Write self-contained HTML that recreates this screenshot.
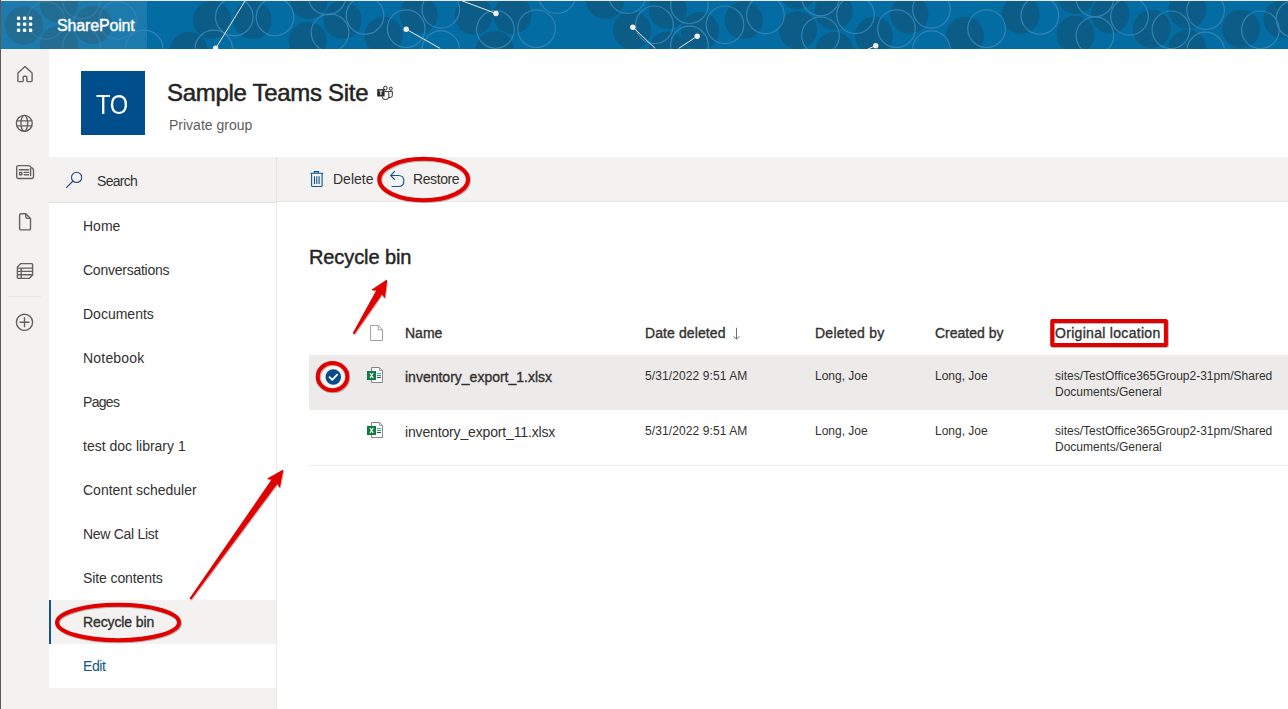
<!DOCTYPE html>
<html><head><meta charset="utf-8">
<style>
*{box-sizing:border-box;margin:0;padding:0}
html,body{width:1288px;height:709px;overflow:hidden;background:#fff;font-family:"Liberation Sans",sans-serif;color:#323130}
.a{position:absolute;white-space:nowrap}
#topline{position:absolute;left:0;top:0;width:1288px;height:1px;background:#ebe7e4}
#leftline{position:absolute;left:0;top:0;width:1px;height:709px;background:#5f5955}
#hdr{position:absolute;left:1px;top:1px;width:1287px;height:48px;overflow:hidden}
#hdrtxt{position:absolute;left:56px;top:16px;font-size:16px;color:#fff;-webkit-text-stroke:0.4px #fff;letter-spacing:-0.15px}
#rail{position:absolute;left:1px;top:49px;width:48px;height:660px;background:#f3f2f1}
#nav{position:absolute;left:49px;top:203px;width:228px;height:506px;background:#fff;border-right:1px solid #edebe9}
#navbottom{position:absolute;left:49px;top:688px;width:227px;height:21px;background:#f3f2f1}
#cmd{position:absolute;left:49px;top:157px;width:1239px;height:45px;background:#f3f2f1;border-bottom:1px solid #e9e7e5}
#searchbox{position:absolute;left:49px;top:157px;width:228px;height:46px;background:#f3f2f1;border-right:1px solid #e6e4e2;border-bottom:1px solid #e1dfdd}
.nv{position:absolute;left:83px;font-size:14px;color:#323130}
.hd{position:absolute;font-size:14px;color:#323130;-webkit-text-stroke:0.35px #323130}
.cell{position:absolute;font-size:12px;color:#323130}
svg{overflow:visible}
</style></head><body>
<div id="topline"></div>
<div id="hdr">
<svg width="1287" height="48" style="position:absolute;left:0;top:0">
<rect width="1287" height="48" fill="#036ca3"/>
<g fill="#0b5c86"><circle cx="22.9" cy="24.6" r="19"/><circle cx="58.0" cy="3.0" r="19"/><circle cx="58.0" cy="44.0" r="19"/><circle cx="92.2" cy="24.0" r="19"/><circle cx="211.0" cy="19.0" r="19"/><circle cx="251.6" cy="19.0" r="19"/><circle cx="188.0" cy="50.0" r="19"/><circle cx="306.7" cy="40.0" r="19"/><circle cx="307.5" cy="-1.0" r="19"/><circle cx="341.5" cy="19.0" r="19"/><circle cx="382.7" cy="34.7" r="19"/><circle cx="417.6" cy="13.8" r="19"/><circle cx="472.7" cy="14.5" r="19"/><circle cx="493.7" cy="48.7" r="19"/><circle cx="511.5" cy="14.0" r="19"/><circle cx="604.3" cy="-1.0" r="19"/><circle cx="631.0" cy="29.3" r="19"/><circle cx="666.7" cy="9.0" r="19"/><circle cx="666.7" cy="49.5" r="19"/><circle cx="699.0" cy="30.0" r="19"/><circle cx="742.7" cy="19.2" r="19"/><circle cx="797.0" cy="29.3" r="19"/><circle cx="797.0" cy="-11.0" r="19"/><circle cx="832.7" cy="9.9" r="19"/><circle cx="833.5" cy="50.0" r="19"/><circle cx="873.0" cy="34.7" r="19"/><circle cx="908.4" cy="13.8" r="19"/><circle cx="963.8" cy="34.7" r="19"/><circle cx="1019.7" cy="13.8" r="19"/><circle cx="1074.6" cy="33.7" r="19"/><circle cx="1074.6" cy="-6.0" r="19"/><circle cx="1109.3" cy="13.4" r="19"/><circle cx="1150.7" cy="27.9" r="19"/><circle cx="1186.3" cy="8.6" r="19"/><circle cx="1186.3" cy="48.0" r="19"/><circle cx="1240.2" cy="27.9" r="19"/><circle cx="1281.6" cy="18.3" r="19"/></g>
<defs><clipPath id="cm"><rect x="146" y="0" width="1200" height="48"/></clipPath><clipPath id="co"><rect x="0" y="0" width="146" height="48"/></clipPath></defs>
<g fill="none" stroke="#3383b5" stroke-width="1.2" clip-path="url(#cm)"><circle cx="45.0" cy="19.4" r="18.8"/><circle cx="80.5" cy="-1.0" r="18.8"/><circle cx="80.5" cy="45.0" r="18.8"/><circle cx="116.6" cy="19.4" r="18.8"/><circle cx="233.3" cy="16.0" r="18.8"/><circle cx="274.0" cy="16.0" r="18.8"/><circle cx="212.8" cy="48.0" r="18.8"/><circle cx="143.2" cy="48.0" r="18.8"/><circle cx="329.0" cy="31.6" r="18.8"/><circle cx="326.0" cy="-5.0" r="18.8"/><circle cx="364.0" cy="14.5" r="18.8"/><circle cx="405.2" cy="27.7" r="18.8"/><circle cx="439.8" cy="8.3" r="18.8"/><circle cx="439.8" cy="48.7" r="18.8"/><circle cx="494.5" cy="28.5" r="18.8"/><circle cx="535.5" cy="27.7" r="18.8"/><circle cx="556.1" cy="-6.4" r="18.8"/><circle cx="626.3" cy="-6.4" r="18.8"/><circle cx="653.5" cy="23.8" r="18.8"/><circle cx="688.4" cy="3.7" r="18.8"/><circle cx="688.4" cy="44.0" r="18.8"/><circle cx="724.0" cy="23.8" r="18.8"/><circle cx="764.4" cy="13.8" r="18.8"/><circle cx="819.5" cy="-4.0" r="18.8"/><circle cx="819.5" cy="34.7" r="18.8"/><circle cx="854.5" cy="13.8" r="18.8"/><circle cx="895.5" cy="27.7" r="18.8"/><circle cx="930.4" cy="8.3" r="18.8"/><circle cx="930.4" cy="48.7" r="18.8"/><circle cx="985.6" cy="27.7" r="18.8"/><circle cx="1038.8" cy="14.5" r="18.8"/><circle cx="1093.9" cy="-3.0" r="18.8"/><circle cx="1093.9" cy="34.6" r="18.8"/><circle cx="1128.5" cy="15.4" r="18.8"/><circle cx="1169.9" cy="28.8" r="18.8"/><circle cx="1204.6" cy="9.6" r="18.8"/><circle cx="1204.6" cy="50.0" r="18.8"/><circle cx="1259.4" cy="28.8" r="18.8"/><circle cx="1294.0" cy="18.0" r="18.8"/></g>
<g fill="none" stroke="#3383b5" stroke-opacity="0.45" stroke-width="1.2" clip-path="url(#co)"><circle cx="45.0" cy="19.4" r="18.8"/><circle cx="80.5" cy="-1.0" r="18.8"/><circle cx="80.5" cy="45.0" r="18.8"/><circle cx="116.6" cy="19.4" r="18.8"/><circle cx="233.3" cy="16.0" r="18.8"/><circle cx="274.0" cy="16.0" r="18.8"/><circle cx="212.8" cy="48.0" r="18.8"/><circle cx="143.2" cy="48.0" r="18.8"/><circle cx="329.0" cy="31.6" r="18.8"/><circle cx="326.0" cy="-5.0" r="18.8"/><circle cx="364.0" cy="14.5" r="18.8"/><circle cx="405.2" cy="27.7" r="18.8"/><circle cx="439.8" cy="8.3" r="18.8"/><circle cx="439.8" cy="48.7" r="18.8"/><circle cx="494.5" cy="28.5" r="18.8"/><circle cx="535.5" cy="27.7" r="18.8"/><circle cx="556.1" cy="-6.4" r="18.8"/><circle cx="626.3" cy="-6.4" r="18.8"/><circle cx="653.5" cy="23.8" r="18.8"/><circle cx="688.4" cy="3.7" r="18.8"/><circle cx="688.4" cy="44.0" r="18.8"/><circle cx="724.0" cy="23.8" r="18.8"/><circle cx="764.4" cy="13.8" r="18.8"/><circle cx="819.5" cy="-4.0" r="18.8"/><circle cx="819.5" cy="34.7" r="18.8"/><circle cx="854.5" cy="13.8" r="18.8"/><circle cx="895.5" cy="27.7" r="18.8"/><circle cx="930.4" cy="8.3" r="18.8"/><circle cx="930.4" cy="48.7" r="18.8"/><circle cx="985.6" cy="27.7" r="18.8"/><circle cx="1038.8" cy="14.5" r="18.8"/><circle cx="1093.9" cy="-3.0" r="18.8"/><circle cx="1093.9" cy="34.6" r="18.8"/><circle cx="1128.5" cy="15.4" r="18.8"/><circle cx="1169.9" cy="28.8" r="18.8"/><circle cx="1204.6" cy="9.6" r="18.8"/><circle cx="1204.6" cy="50.0" r="18.8"/><circle cx="1259.4" cy="28.8" r="18.8"/><circle cx="1294.0" cy="18.0" r="18.8"/></g>
<g stroke="#f3ece6" stroke-width="1"><line x1="244.6" y1="-1.0" x2="214.6" y2="47.5"/><line x1="405.2" y1="28.2" x2="439.3" y2="47.5"/><line x1="460.3" y1="-0.5" x2="495.0" y2="12.5"/><line x1="631.8" y1="26.2" x2="654.3" y2="47.5"/><line x1="696.2" y1="35.2" x2="677.6" y2="47.5"/><line x1="874.7" y1="44.7" x2="867.0" y2="48.0"/></g>
<g fill="#f5efe9"><circle cx="214.6" cy="47.3" r="2.7"/><circle cx="405.2" cy="28.2" r="2.7"/><circle cx="495.0" cy="12.5" r="2.7"/><circle cx="631.8" cy="26.2" r="2.7"/><circle cx="696.2" cy="35.2" r="2.7"/><circle cx="874.7" cy="44.7" r="2.7"/></g>
<rect x="0" y="0" width="146" height="48" fill="#ffffff" fill-opacity="0.1"/>
<rect x="15.9" y="15.6" width="3.4" height="3.4" rx="1.1" fill="#fff"/>
<rect x="21.9" y="15.6" width="3.4" height="3.4" rx="1.1" fill="#fff"/>
<rect x="27.9" y="15.6" width="3.4" height="3.4" rx="1.1" fill="#fff"/>
<rect x="15.9" y="21.6" width="3.4" height="3.4" rx="1.1" fill="#fff"/>
<rect x="21.9" y="21.6" width="3.4" height="3.4" rx="1.1" fill="#fff"/>
<rect x="27.9" y="21.6" width="3.4" height="3.4" rx="1.1" fill="#fff"/>
<rect x="15.9" y="27.6" width="3.4" height="3.4" rx="1.1" fill="#fff"/>
<rect x="21.9" y="27.6" width="3.4" height="3.4" rx="1.1" fill="#fff"/>
<rect x="27.9" y="27.6" width="3.4" height="3.4" rx="1.1" fill="#fff"/>
</svg>
<div id="hdrtxt">SharePoint</div>
</div>
<div id="leftline"></div>
<div id="rail"></div>
<svg class="a" style="left:0;top:0" width="49" height="709">
 <g fill="none" stroke="#616161" stroke-width="1.4" stroke-linejoin="round" stroke-linecap="round">
  <path d="M17.9 73 L25 66.6 L32.1 73 V80.4 Q32.1 81.6 30.9 81.6 H28 Q26.8 81.6 26.8 80.4 V77.3 Q26.8 76.3 25.8 76.3 H24.2 Q23.2 76.3 23.2 77.3 V80.4 Q23.2 81.6 22 81.6 H19.1 Q17.9 81.6 17.9 80.4 Z"/>
  <circle cx="24.3" cy="123.3" r="7.9"/>
  <ellipse cx="24.3" cy="123.3" rx="3.4" ry="7.9"/>
  <path d="M16.8 120.9 H31.8 M16.8 125.9 H31.8"/>
  <path d="M18.4 165.6 H28.6 Q30.6 165.6 31.2 167.6 Q33.5 168.2 33.5 170.6 V176.8 Q33.5 178.5 31.8 178.5 H18.4 Q16.7 178.5 16.7 176.8 V167.3 Q16.7 165.6 18.4 165.6 Z"/>
  <path d="M30.6 168.6 V175.6"/>
  <path d="M19.3 169.8 H28.6 M24.2 172.4 H28.6 M24.2 174.7 H28.6"/>
  <rect x="19.6" y="172.4" width="2.2" height="2.4"/>
  <path d="M21.1 213.7 H25.8 L30.5 218.4 V228.4 Q30.5 229.9 29 229.9 H21.1 Q19.6 229.9 19.6 228.4 V215.2 Q19.6 213.7 21.1 213.7 Z M25.8 213.9 V217 Q25.8 218.4 27.2 218.4 H30.3"/>
  <path d="M20.8 263.6 H31.6 Q32.6 263.6 32.6 264.6 V275 L29.2 278.4 H18.4 Q17.4 278.4 17.4 277.4 V267 Z M17.6 268.1 H32.4 M17.6 271.4 H32.4 M17.6 274.7 H32.4 M21.2 268.1 V278.2"/>
  <circle cx="24.5" cy="322.3" r="8.1"/>
  <path d="M24.5 317.8 V326.8 M20 322.3 H29"/>
 </g>
 <rect x="8" y="296" width="33" height="1" fill="#e8e6e4"/>
</svg>

<!-- site header -->
<div class="a" id="logo" style="left:81px;top:71px;width:64px;height:64px;background:#004e8c"></div>
<div class="a" id="to" style="left:95.5px;top:89.7px;font-size:27.5px;line-height:30px;color:#fff;transform:scaleX(0.86);transform-origin:0 0;letter-spacing:-0.3px">TO</div>
<div class="a" id="title" style="left:167px;top:79px;font-size:24px;color:#242424;-webkit-text-stroke:0.5px #242424;letter-spacing:-0.3px">Sample Teams Site</div>
<svg class="a" style="left:0;top:0" width="400" height="110">
 <g fill="none" stroke="#2b2b2b" stroke-width="1">
  <circle cx="385.4" cy="88" r="1.8"/>
  <circle cx="390.8" cy="88.6" r="1.5"/>
  <path d="M384.6 91.4 H388.8 V96.6 Q388.8 99.6 385.4 99.6 Q382.6 99.6 382.2 96.8"/>
  <path d="M388.8 91.4 H392.3 V95.6 Q392.3 97.4 390.4 97.4 H389"/>
 </g>
 <rect x="377.2" y="89.1" width="7.4" height="7.4" fill="#2b2b2b"/>
 <path d="M379.2 91 H382.6 M380.9 91 V95" stroke="#fff" stroke-width="1.1"/>
</svg>
<div class="a" id="pgroup" style="left:169px;top:117px;font-size:14px;color:#605e5c">Private group</div>

<div id="cmd"></div>
<div id="searchbox"></div>
<svg class="a" style="left:0;top:0" width="500" height="210">
 <g fill="none" stroke="#22407c" stroke-width="1.1">
  <circle cx="76.6" cy="177.4" r="5.1"/>
  <path d="M73 181 L66.2 187.8"/>
 </g>
 <g fill="none" stroke="#0f548c" stroke-width="1.1">
  <path d="M310.5 173.2 H323.2 M314.3 173 V171.6 H318.5 V173 M311.6 173.4 V185.4 Q311.6 186.5 312.8 186.5 H321 Q322.1 186.5 322.1 185.4 V173.4 M314.5 176.2 V184 M316.8 176.2 V184 M319.1 176.2 V184"/>
  <path d="M394.8 171.2 L390.7 175.5 L394.8 179.8 M390.9 175.5 H398.3 Q403.9 175.5 403.9 181 Q403.9 186.5 398.3 186.5 H391.6"/>
 </g>
</svg>
<div class="a" id="search" style="left:97px;top:173px;font-size:14px;color:#323130;letter-spacing:-0.7px">Search</div>
<div class="a" id="delete" style="left:333px;top:171px;font-size:14px">Delete</div>
<div class="a" id="restore" style="left:413px;top:171px;font-size:14px;letter-spacing:-0.4px">Restore</div>

<div id="nav"></div>
<div class="nv a" id="n1" style="top:218px">Home</div>
<div class="nv a" id="n2" style="top:262px;letter-spacing:-0.25px">Conversations</div>
<div class="nv a" id="n3" style="top:306px">Documents</div>
<div class="nv a" id="n4" style="top:350px;letter-spacing:0.2px">Notebook</div>
<div class="nv a" id="n5" style="top:394px;letter-spacing:-0.7px">Pages</div>
<div class="nv a" id="n6" style="top:438px">test doc library 1</div>
<div class="nv a" id="n7" style="top:482px">Content scheduler</div>
<div class="nv a" id="n8" style="top:526px;letter-spacing:-0.3px">New Cal List</div>
<div class="nv a" id="n9" style="top:570px;letter-spacing:-0.1px">Site contents</div>
<div class="a" style="left:49px;top:600px;width:227px;height:44px;background:#f3f2f1;border-left:2px solid #0f548c"></div>
<div class="nv a" id="n10" style="top:614px;-webkit-text-stroke:0.35px #323130;letter-spacing:-0.12px">Recycle bin</div>
<div class="nv a" id="n11" style="top:658px;color:#0f548c;letter-spacing:-0.4px">Edit</div>
<div id="navbottom"></div>

<!-- content -->
<div class="a" id="rbh" style="left:309px;top:246px;font-size:20px;color:#242424;-webkit-text-stroke:0.45px #242424;letter-spacing:-0.1px">Recycle bin</div>
<svg class="a" style="left:0;top:0" width="1288" height="709">
 <path d="M370.6 325.5 H378.4 L382.5 329.6 V340.5 H370.6 Z M378.2 325.7 V329.8 H382.3" fill="#fff" stroke="#a19f9d" stroke-width="1"/>
</svg>
<div class="hd a" id="h1" style="left:405px;top:325px">Name</div>
<div class="hd a" id="h2" style="left:645px;top:325px;letter-spacing:0.1px">Date deleted</div>
<svg class="a" style="left:730px;top:326px" width="12" height="16"><path d="M6.5 1.8 V12.8 M3.6 10.6 L6.5 13 L9.4 10.6" fill="none" stroke="#6d6c6a" stroke-width="1"/></svg>
<div class="hd a" id="h3" style="left:815px;top:325px;letter-spacing:0.25px">Deleted by</div>
<div class="hd a" id="h4" style="left:935px;top:325px">Created by</div>
<div class="hd a" id="h5" style="left:1055px;top:325px;letter-spacing:0.3px">Original location</div>

<div class="a" style="left:309px;top:355px;width:979px;height:55px;background:#edebe9"></div>
<div class="a" style="left:309px;top:465px;width:979px;height:1px;background:#edebe9"></div>
<svg class="a" style="left:0;top:0" width="1288" height="709">
 <circle cx="332.8" cy="377" r="11.5" fill="#f6f5f4"/>
 <circle cx="333.3" cy="377" r="7.8" fill="#0a4c8a"/>
 <path d="M329.6 377.2 L332.2 379.8 L337.2 374.6" fill="none" stroke="#fff" stroke-width="1.8" stroke-linecap="round" stroke-linejoin="round"/>
 <g id="xl">
  <path d="M371.5 367.5 H379.3 L382.5 370.7 V382.5 H371.5 Z" fill="#fff" stroke="#8a8886" stroke-width="1"/>
  <path d="M379.5 367.8 V370.5 H382.2" fill="none" stroke="#8a8886" stroke-width="0.8"/>
  <rect x="367" y="371" width="9" height="9" fill="#107c41"/>
  <path d="M370 373 L373.2 378 M373.2 373 L370 378" stroke="#fff" stroke-width="1.2"/>
  <path d="M377 373.5 H381" stroke="#33c481" stroke-width="1"/>
  <path d="M377 375.5 H381" stroke="#21a366" stroke-width="1"/>
  <path d="M377 377.5 H381" stroke="#185c37" stroke-width="1"/>
 </g>
 <g transform="translate(0,55)">
  <path d="M371.5 367.5 H379.3 L382.5 370.7 V382.5 H371.5 Z" fill="#fff" stroke="#8a8886" stroke-width="1"/>
  <path d="M379.5 367.8 V370.5 H382.2" fill="none" stroke="#8a8886" stroke-width="0.8"/>
  <rect x="367" y="371" width="9" height="9" fill="#107c41"/>
  <path d="M370 373 L373.2 378 M373.2 373 L370 378" stroke="#fff" stroke-width="1.2"/>
  <path d="M377 373.5 H381" stroke="#33c481" stroke-width="1"/>
  <path d="M377 375.5 H381" stroke="#21a366" stroke-width="1"/>
  <path d="M377 377.5 H381" stroke="#185c37" stroke-width="1"/>
 </g>
</svg>
<div class="a" id="f1" style="left:405px;top:369px;font-size:14px;-webkit-text-stroke:0.35px #323130">inventory_export_1.xlsx</div>
<div class="cell a" id="d1" style="left:645px;top:369px;letter-spacing:0.1px">5/31/2022 9:51 AM</div>
<div class="cell a" id="b1" style="left:815px;top:369px">Long, Joe</div>
<div class="cell a" id="c1" style="left:935px;top:369px">Long, Joe</div>
<div class="cell a" id="l1" style="left:1055px;top:368px;line-height:16px">sites/TestOffice365Group2-31pm/Shared<br>Documents/General</div>

<div class="a" id="f2" style="left:405px;top:424px;font-size:14px;letter-spacing:-0.15px">inventory_export_11.xlsx</div>
<div class="cell a" id="d2" style="left:645px;top:424px;letter-spacing:0.1px">5/31/2022 9:51 AM</div>
<div class="cell a" id="b2" style="left:815px;top:424px">Long, Joe</div>
<div class="cell a" id="c2" style="left:935px;top:424px">Long, Joe</div>
<div class="cell a" id="l2" style="left:1055px;top:423px;line-height:16px">sites/TestOffice365Group2-31pm/Shared<br>Documents/General</div>

<!-- annotations -->
<svg class="a" style="left:0;top:0" width="1288" height="709">
 <defs>
  <filter id="sh" x="-20%" y="-20%" width="140%" height="140%"><feDropShadow dx="0.8" dy="0.8" stdDeviation="0.6" flood-color="#000" flood-opacity="0.35"/></filter>
 </defs>
 <g fill="none" stroke="#e00000" stroke-width="4" filter="url(#sh)">
  <ellipse cx="423.6" cy="179.5" rx="44.4" ry="20.7"/>
  <ellipse cx="118" cy="622.5" rx="61" ry="17.7"/>
  <ellipse cx="332.5" cy="376.7" rx="14.8" ry="13.6"/>
  <rect x="1052.2" y="321" width="113.7" height="23.9" stroke-linejoin="round"/>
 </g>
<g fill="#e00000" stroke="#e00000" stroke-width="1.2" stroke-linejoin="round" filter="url(#sh)">
 <path d="M190.28 598.37 L272.58 479.21 L268.05 478.67 L282.60 470.40 L279.42 486.83 L277.46 482.71 L190.92 598.83 Z"/>
 <path d="M353.46 332.99 L377.10 289.96 L372.54 289.72 L386.50 280.50 L384.43 297.11 L382.19 293.13 L354.14 333.41 Z"/>
</g>
</svg>

</body></html>
